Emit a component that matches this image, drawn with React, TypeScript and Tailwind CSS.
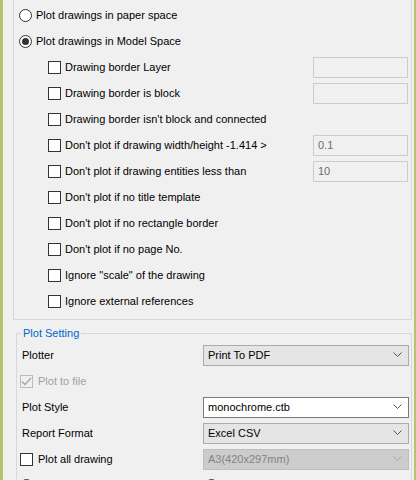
import React from "react";

const font = { fontFamily: '"Liberation Sans", Arial, sans-serif' };

type Opt = {
  label: string;
  field?: string;
  empty?: boolean;
};

const filters: Opt[] = [
  { label: "Drawing border Layer", empty: true },
  { label: "Drawing border is block", empty: true },
  { label: "Drawing border isn't block and connected" },
  { label: "Don't plot if drawing width/height -1.414 >", field: "0.1" },
  { label: "Don't plot if drawing entities less than", field: "10" },
  { label: "Don't plot if no title template" },
  { label: "Don't plot if no rectangle border" },
  { label: "Don't plot if no page No." },
  { label: 'Ignore "scale" of the drawing' },
  { label: "Ignore external references" },
];

function Radio({ checked }: { checked?: boolean }) {
  return (
    <span className="w-[13px] h-[13px] rounded-full border border-[#333] bg-white flex items-center justify-center shrink-0">
      {checked && <span className="w-[7px] h-[7px] rounded-full bg-[#333]" />}
    </span>
  );
}

function Check({ checked, disabled }: { checked?: boolean; disabled?: boolean }) {
  return (
    <span
      className={
        "w-[13px] h-[13px] border flex items-center justify-center shrink-0 " +
        (disabled ? "border-[#bcbcbc] bg-[#f0f0f0]" : "border-[#333] bg-white")
      }
    >
      {checked && (
        <svg width="11" height="9" viewBox="0 0 11 9">
          <path d="M1 4.5 L4 7.5 L10 1" fill="none" stroke={disabled ? "#a3a3a3" : "#333"} strokeWidth="1.3" />
        </svg>
      )}
    </span>
  );
}

function Chevron({ color = "#555" }: { color?: string }) {
  return (
    <svg width="9" height="6" viewBox="0 0 9 6" className="shrink-0">
      <path d="M0.5 0.5 L4.5 4.5 L8.5 0.5" fill="none" stroke={color} strokeWidth="1" />
    </svg>
  );
}

function Combo({ value, variant }: { value: string; variant: "button" | "list" | "disabled" }) {
  const box =
    variant === "list"
      ? "bg-white border-[#7a7a7a] text-black"
      : variant === "disabled"
        ? "bg-[#cccccc] border-[#bfbfbf] text-[#838383]"
        : "bg-[#e5e5e5] border-[#acacac] text-black";
  return (
    <div className={"w-[206px] h-[21px] border flex items-center justify-between pl-[4px] pr-[6px] " + box}>
      <span>{value}</span>
      <Chevron color={variant === "disabled" ? "#a8a8a8" : "#555"} />
    </div>
  );
}

export default function App() {
  return (
    <div className="w-[416px] h-[480px] overflow-hidden flex bg-[#f0f0f0] text-[11px] text-black" style={font}>
      <div className="w-[3px] bg-[#b4c36c] shrink-0" />

      <div className="flex-1 flex flex-col">
        {/* plot range options */}
        <div className="ml-[10px] mr-[2px] border-x border-b border-[#d7d7d7] pt-[2px] pb-[5px]">
          <label className="h-[26px] flex items-center gap-[4px] pl-[5px]">
            <Radio />
            <span>Plot drawings in paper space</span>
          </label>
          <label className="h-[26px] flex items-center gap-[4px] pl-[5px]">
            <Radio checked />
            <span>Plot drawings in Model Space</span>
          </label>
          {filters.map((f) => (
            <div key={f.label} className="h-[26px] flex items-center pl-[34px] pr-[3px]">
              <Check />
              <span className="ml-[4px] flex-1">{f.label}</span>
              {(f.empty || f.field) && (
                <div className="w-[95px] h-[21px] border border-[#cccccc] bg-[#f0f0f0] text-[#6d6d6d] flex items-center pl-[4px]">
                  {f.field}
                </div>
              )}
            </div>
          ))}
        </div>

        {/* plot setting */}
        <fieldset className="ml-[13px] mr-[2px] mt-[6px] border border-[#d7d7d7] pt-[2px]">
          <legend className="ml-[4px] px-[2px] text-[#0066cc] leading-[14px]">Plot Setting</legend>

          <div className="h-[26px] flex items-center pl-[5px]">
            <span className="w-[181px]">Plotter</span>
            <Combo value="Print To PDF" variant="button" />
          </div>
          <div className="h-[26px] flex items-center gap-[5px] pl-[3px] text-[#a0a0a0]">
            <Check checked disabled />
            <span>Plot to file</span>
          </div>
          <div className="h-[26px] flex items-center pl-[5px]">
            <span className="w-[181px]">Plot Style</span>
            <Combo value="monochrome.ctb" variant="list" />
          </div>
          <div className="h-[26px] flex items-center pl-[5px]">
            <span className="w-[181px]">Report Format</span>
            <Combo value="Excel CSV" variant="button" />
          </div>
          <div className="h-[26px] flex items-center pl-[3px]">
            <div className="w-[183px] flex items-center gap-[5px]">
              <Check />
              <span>Plot all drawing</span>
            </div>
            <Combo value="A3(420x297mm)" variant="disabled" />
          </div>
          {/* next row of radios, only its top edge shows */}
          <div className="h-[26px] flex items-center pl-[3px]">
            <div className="w-[185px]">
              <Radio />
            </div>
            <Radio />
          </div>
        </fieldset>
      </div>

      <div className="w-[2px] bg-[#b4c36c] shrink-0" />
    </div>
  );
}
